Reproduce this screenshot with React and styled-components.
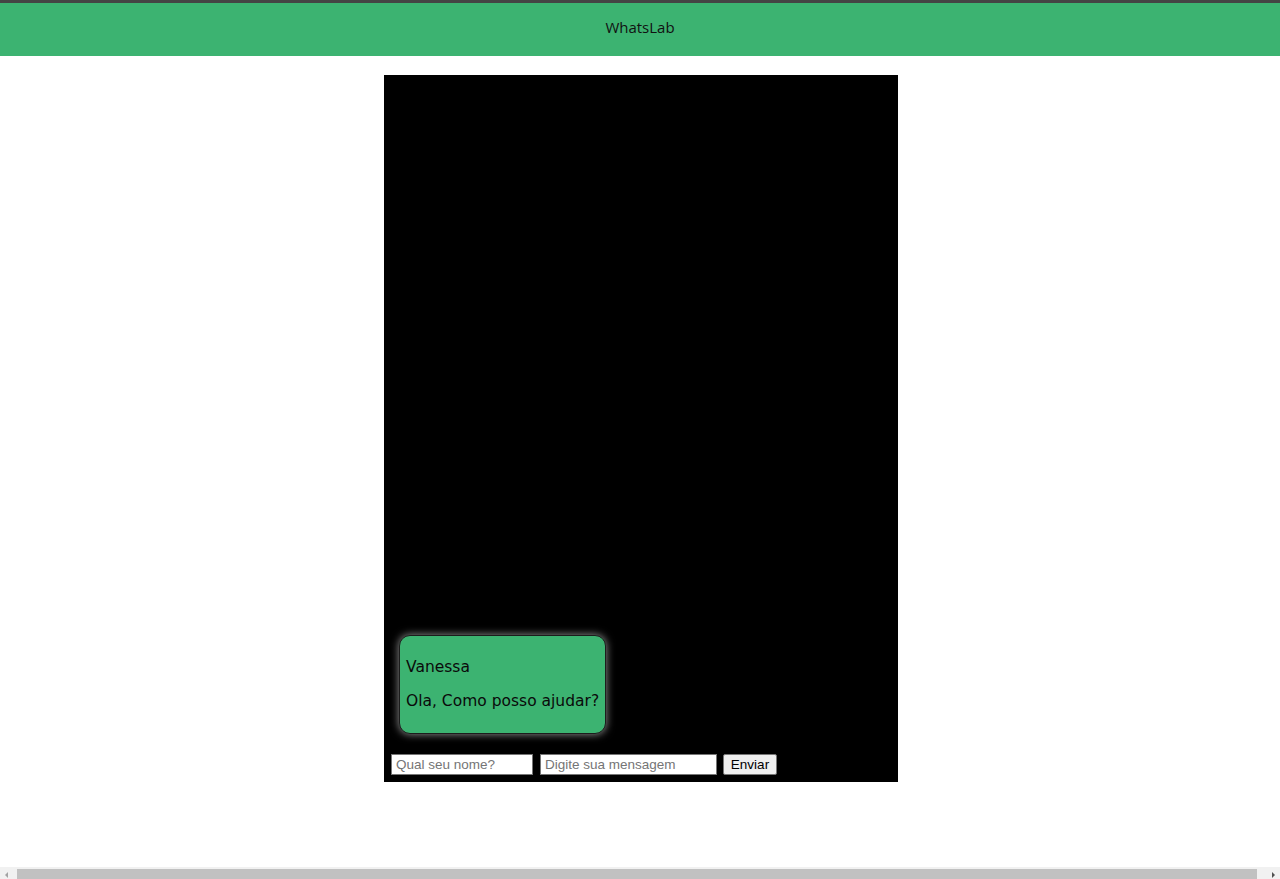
import React from "react";
import styled, { createGlobalStyle } from "styled-components";

const GlobalStyle = createGlobalStyle`
  body {
    margin: 0;
    background: #ffffff;
    font-family: "Liberation Sans", Arial, sans-serif;
    overflow: hidden;
  }
`;

const Page = styled.div`
  width: 100vw;
`;

const Header = styled.header`
  height: 53px;
  border-top: 3px solid #444444;
  background: #3cb371;
  display: flex;
  align-items: center;
  justify-content: center;
  padding-bottom: 5px;
  box-sizing: content-box;
  height: 48px;
  font-family: "Open Sans", "Noto Sans", sans-serif;
  font-size: 15px;
  color: #111111;
`;

const Main = styled.main`
  display: flex;
  justify-content: center;
  padding-top: 19px;
  padding-left: 2px;
`;

const ChatBox = styled.section`
  width: 514px;
  height: 707px;
  background: #000000;
  display: flex;
  flex-direction: column;
`;

const Messages = styled.div`
  flex: 1;
  display: flex;
  flex-direction: column;
  justify-content: flex-end;
  align-items: flex-start;
  padding: 0 15px 20px;
`;

const Bubble = styled.div`
  background: #3cb371;
  border: 1px solid #1c1c1c;
  border-radius: 11px;
  padding: 6px 6px;
  box-shadow: 0 0 8px rgba(255, 255, 255, 0.6);
  font-family: "DejaVu Sans", sans-serif;
  font-size: 15.5px;
  color: #0a0a0a;
`;

const Line = styled.p`
  margin: 16px 0;
  line-height: 18.6px;
`;

const Form = styled.form`
  display: flex;
  align-items: center;
  padding: 0 7px 7px;
`;

const Input = styled.input`
  box-sizing: border-box;
  width: ${(p) => p.$w}px;
  height: 21px;
  margin: 0 ${(p) => p.$gap}px 0 0;
  padding: 1px 4px;
  border: 1px solid #767676;
  border-radius: 0;
  background: #ffffff;
  font-family: "Liberation Sans", Arial, sans-serif;
  font-size: 13.5px;
  color: #000;
  &::placeholder {
    color: #757575;
  }
`;

const Button = styled.button`
  box-sizing: border-box;
  width: 54px;
  height: 21px;
  padding: 1px 6px;
  border: 1px solid #767676;
  border-radius: 2px;
  background: #efefef;
  font-family: "Liberation Sans", Arial, sans-serif;
  font-size: 13.5px;
  color: #000;
`;

const ScrollBar = styled.div`
  position: fixed;
  left: 0;
  right: 0;
  bottom: 0;
  height: 12px;
  background: #f1f1f1;
  display: flex;
  align-items: flex-end;
`;

const Arrow = styled.div`
  width: 17px;
  height: 12px;
  display: flex;
  align-items: center;
  justify-content: center;
  &::before {
    content: "";
    width: 0;
    height: 0;
    border-top: 3px solid transparent;
    border-bottom: 3px solid transparent;
    ${(p) =>
      p.$dir === "left"
        ? "border-right: 3px solid #a3a3a3; margin-right: 4px;"
        : "border-left: 3px solid #505050; margin-left: 4px;"}
    margin-top: 3px;
  }
`;

const Thumb = styled.div`
  flex: 1;
  height: 10px;
  background: #c1c1c1;
  margin-right: 6px;
`;

export default function App() {
  return (
    <>
      <GlobalStyle />
      <Page>
        <Header>WhatsLab</Header>
        <Main>
          <ChatBox>
            <Messages>
              <Bubble>
                <Line>Vanessa</Line>
                <Line>Ola, Como posso ajudar?</Line>
              </Bubble>
            </Messages>
            <Form onSubmit={(e) => e.preventDefault()}>
              <Input $w={142} $gap={7} placeholder="Qual seu nome?" />
              <Input $w={177} $gap={6} placeholder="Digite sua mensagem" />
              <Button type="submit">Enviar</Button>
            </Form>
          </ChatBox>
        </Main>
      </Page>
      <ScrollBar aria-hidden="true">
        <Arrow $dir="left" />
        <Thumb />
        <Arrow $dir="right" />
      </ScrollBar>
    </>
  );
}
